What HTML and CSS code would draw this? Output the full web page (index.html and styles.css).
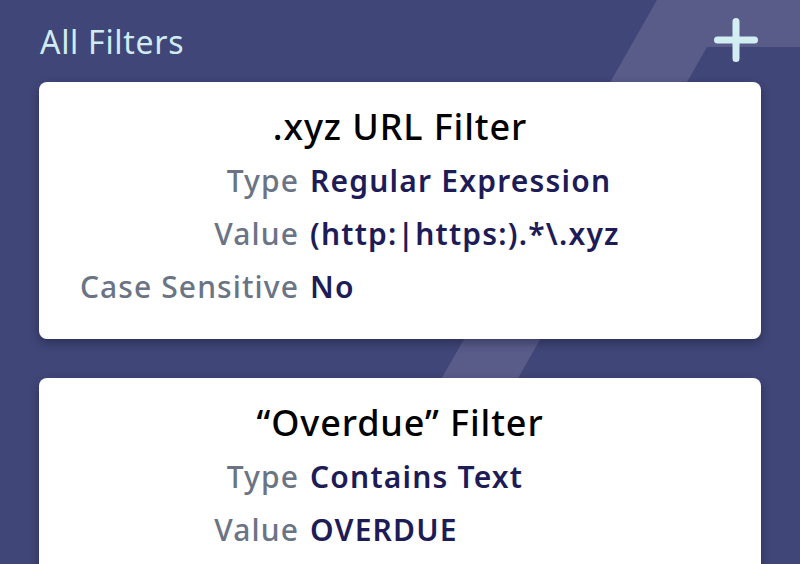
FILE: index.html
```html
<!DOCTYPE html>
<html lang="en">
<head>
    <meta charset="UTF-8">
    <meta name="viewport" content="width=device-width, initial-scale=1.0">
    <title>All Filters</title>
    <link rel="stylesheet" href="styles.css">
</head>
<body>
    <svg class="backdrop" viewBox="0 0 800 564" preserveAspectRatio="none" aria-hidden="true">
        <polygon points="657,0 800,0 800,47 707,47 412,564 336,564" fill="#595c89"/>
    </svg>

    <div class="page">
        <header class="topbar">
            <h1>All Filters</h1>
            <button class="add" aria-label="Add filter">
                <svg width="44" height="44" viewBox="0 0 44 44">
                    <path d="M22 3.5v37M3.5 22h37" stroke="#d3eef3" stroke-width="7" stroke-linecap="round"/>
                </svg>
            </button>
        </header>

        <div class="filter">
            <h2>.xyz URL Filter</h2>
            <div class="fields">
                <span class="label">Type</span><span class="value">Regular Expression</span>
                <span class="label">Value</span><span class="value">(http:|https:).*\.xyz</span>
                <span class="label">Case Sensitive</span><span class="value">No</span>
            </div>
        </div>

        <div class="filter">
            <h2>“Overdue” Filter</h2>
            <div class="fields">
                <span class="label">Type</span><span class="value">Contains Text</span>
                <span class="label">Value</span><span class="value">OVERDUE</span>
            </div>
        </div>
    </div>
</body>
</html>
```

FILE: styles.css
```css
html, body { margin: 0; height: 100%; overflow: hidden; }
body { background: #404677; font-family: "Noto Sans", "Open Sans", sans-serif; position: relative; }
.backdrop { position: absolute; left: 0; top: 0; width: 800px; height: 564px; z-index: 0; }
.page { position: relative; z-index: 1; padding: 0 39px; }

.topbar { display: flex; justify-content: space-between; align-items: center; height: 82px; }
.topbar h1 { margin: 0; font-size: 32px; font-weight: 400; color: #d0ecf3; line-height: 82px; padding-left: 1px; margin-top: 2px; letter-spacing: 0.7px; }
.add { background: none; border: none; padding: 0; margin-right: 3px; margin-top: -3px; display: flex; cursor: pointer; }

.filter { background: #fff; border-radius: 8px; box-shadow: 0 4px 10px rgba(20, 22, 50, 0.45); padding: 17px 0 26px; margin-bottom: 39px; }
.filter h2 { margin: 0; text-align: center; font-size: 36px; font-weight: 500; line-height: 55px; color: #000; letter-spacing: 0.9px; }
.fields { display: grid; grid-template-columns: 260px 1fr; column-gap: 11px; font-size: 30px; line-height: 53px; }
.label { text-align: right; color: #6a7485; font-weight: 500; letter-spacing: 1.1px; }
.value { color: #1d1c57; font-weight: 600; letter-spacing: 1.2px; }
```
